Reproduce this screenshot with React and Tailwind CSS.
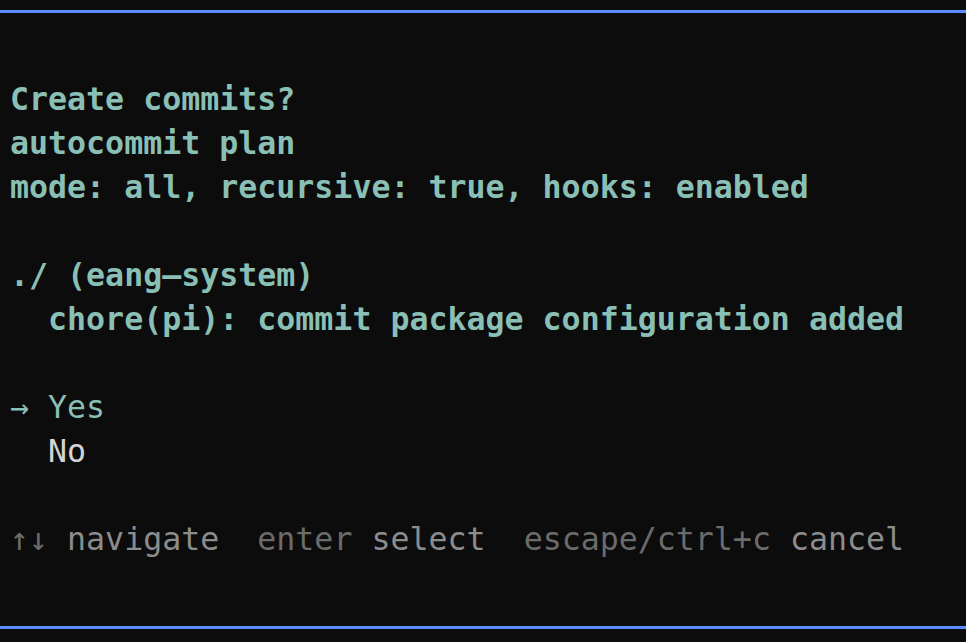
import React from "react";

const teal = "text-[#8abfb5]";

function Line({ children, className = "" }) {
  return <div className={`h-[44px] whitespace-pre ${className}`}>{children}</div>;
}

function Footer() {
  const hints = [
    { key: "↑↓", label: "navigate" },
    { key: "enter", label: "select" },
    { key: "escape/ctrl+c", label: "cancel" },
  ];
  return (
    <Line>
      {hints.map((h, i) => (
        <span key={h.key}>
          {i > 0 && "  "}
          <span className="text-[#6b6b6b]">{h.key}</span>{" "}
          <span className="text-[#8c8c8c]">{h.label}</span>
        </span>
      ))}
    </Line>
  );
}

export default function App() {
  return (
    <div
      className="min-h-screen bg-[#0c0c0c] pt-[10px] text-[31.6px] leading-[44px]"
      style={{ fontFamily: '"DejaVu Sans Mono", "Liberation Mono", monospace' }}
    >
      <div className="border-y-[3px] border-[#5b8cff] px-[10px] pt-[64px] pb-[65px]">
        <div className={`font-bold ${teal}`}>
          <Line>Create commits?</Line>
          <Line>autocommit plan</Line>
          <Line>mode: all, recursive: true, hooks: enabled</Line>
          <Line />
          <Line>./ (eang–system)</Line>
          <Line>  chore(pi): commit package configuration added</Line>
          <Line />
        </div>
        <Line className={teal}>→ Yes</Line>
        <Line className="text-[#d4d4d4]">  No</Line>
        <Line />
        <Footer />
      </div>
    </div>
  );
}
